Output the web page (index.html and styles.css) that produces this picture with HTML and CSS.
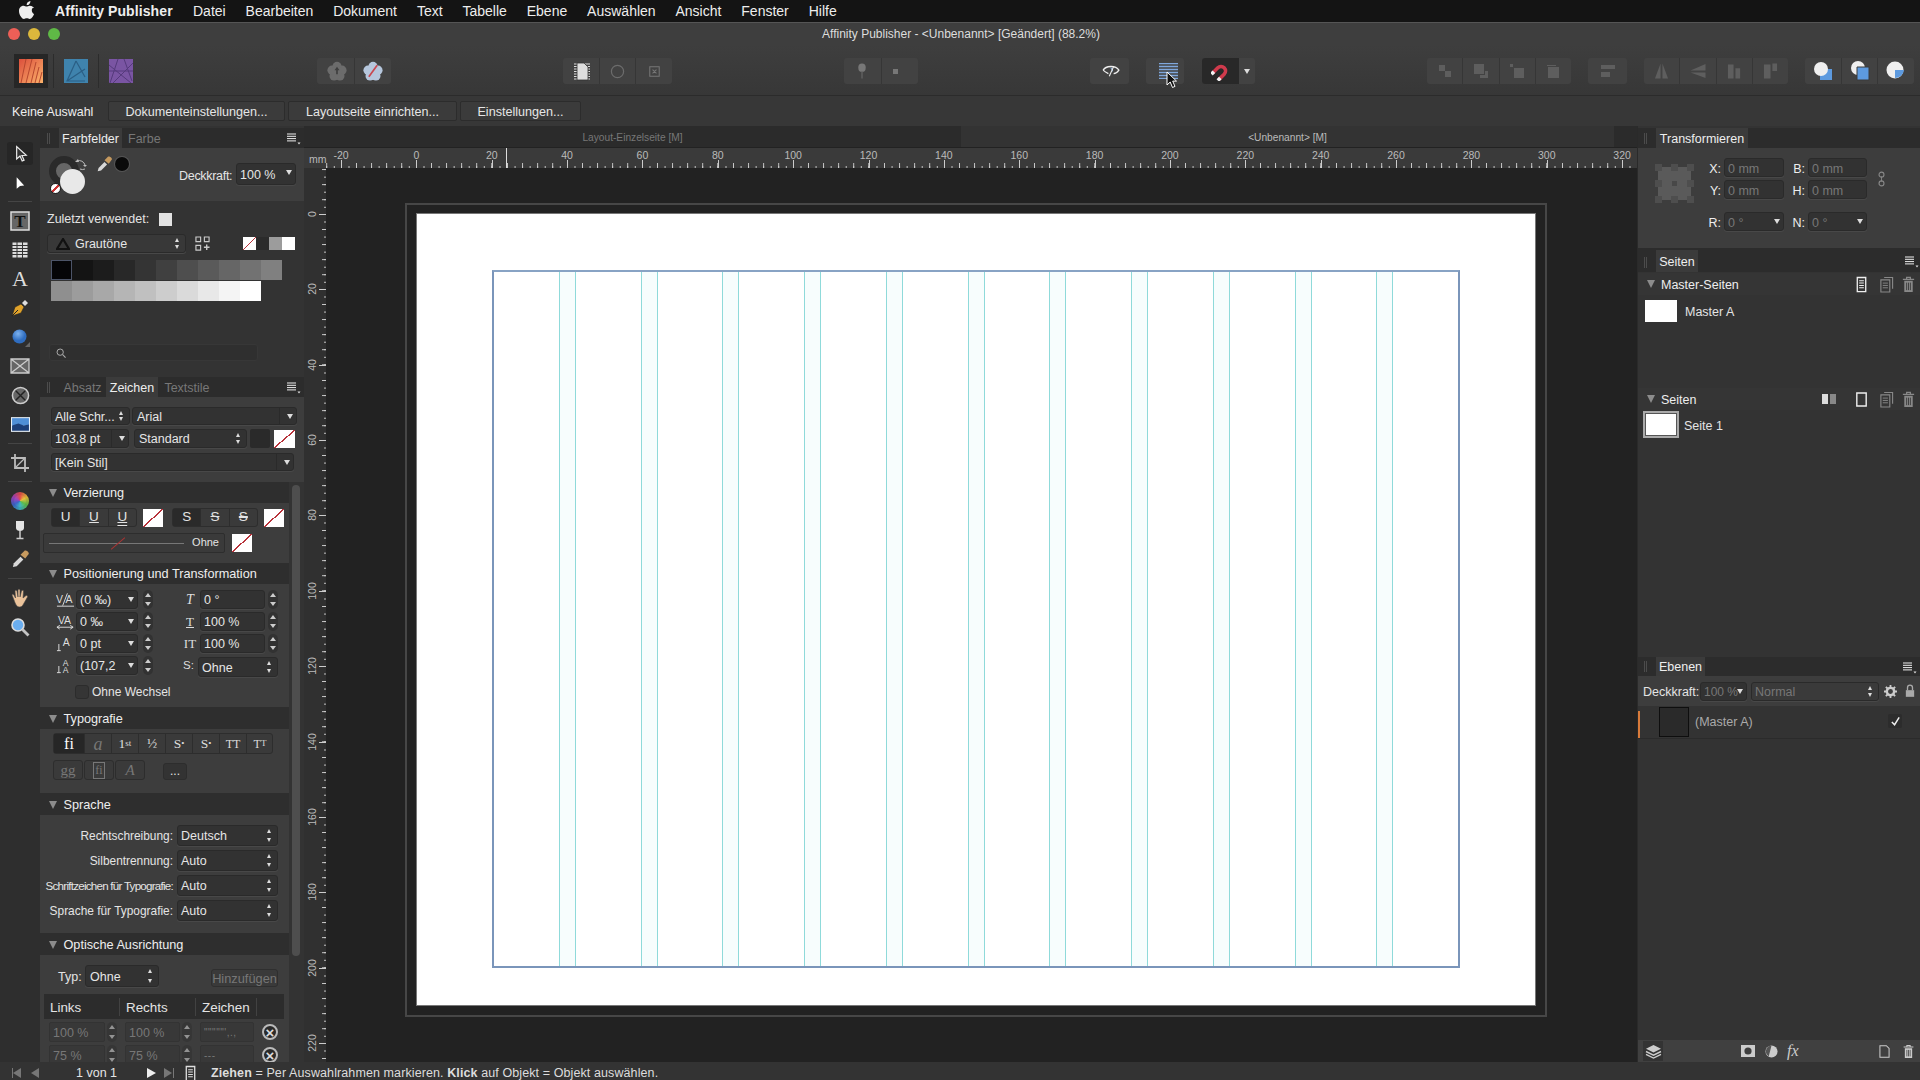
FILE: index.html
```html
<!DOCTYPE html>
<html lang="de">
<head>
<meta charset="utf-8">
<title>Affinity Publisher</title>
<link rel="stylesheet" href="styles.css">
</head>
<body>
<svg class="sprite" aria-hidden="true">
  <defs>
    <symbol id="pmenu" viewBox="0 0 14 12"><path d="M0 1h9M0 3.300h9M0 5.600h9M0 7.900h9" stroke="#eee" stroke-width="1"/><path d="M10.500 9.500h3l-1.500 2z" fill="#ddd"/></symbol>
    <symbol id="doc" viewBox="0 0 16 18"><path d="M3.500 1.500h9v15h-9z" fill="none" stroke="currentColor" stroke-width="1.400"/><path d="M5.500 5h5M5.500 7.500h5M5.500 10h5M5.500 12.500h5" stroke="currentColor" stroke-width="1.100"/></symbol>
    <symbol id="docs" viewBox="0 0 16 18"><path d="M5.500 1.500h9v12M2 4h9.500v13H2z" fill="none" stroke="currentColor" stroke-width="1.200"/><path d="M4 7.500h5.500M4 10h5.500M4 12.500h5.500" stroke="currentColor" stroke-width="1"/></symbol>
    <symbol id="trash" viewBox="0 0 16 18"><path d="M2 3.500h12M6 3V1.500h4V3" fill="none" stroke="currentColor" stroke-width="1.300"/><path d="M3.500 5h9v12h-9z" fill="currentColor"/><path d="M6 7v8M8 7v8M10 7v8" stroke="#333" stroke-width=".9"/></symbol>
    <symbol id="flower" viewBox="0 0 24 24"><circle cx="12" cy="6.500" r="5.500"/><circle cx="18" cy="11" r="5.500"/><circle cx="15.500" cy="18" r="5.500"/><circle cx="8.500" cy="18" r="5.500"/><circle cx="6" cy="11" r="5.500"/><circle cx="12" cy="12" r="6"/></symbol>
  </defs>
</svg>

<header class="menubar">
  <svg class="apple" viewBox="0 0 16 18"><path fill="#eee" d="M11.400 0c.1 1.100-.3 2.100-1 2.900-.7.800-1.700 1.300-2.700 1.200-.1-1 .4-2.100 1-2.800C9.400.6 10.500.1 11.400 0zM14.700 6.100c-1.200.8-1.900 1.900-1.900 3.300 0 1.600.9 2.800 2.300 3.500-.4 1.100-.9 2.100-1.600 3.100-.9 1.300-1.800 2-2.800 2-1.100 0-1.600-.7-2.900-.7s-1.800.7-2.900.7c-1 0-1.900-.8-2.900-2.200C.7 14 0 11.900 0 10c0-3.100 2-5.200 4.600-5.200 1.200 0 2.200.8 3 .8.700 0 1.900-.9 3.300-.9 1.600 0 2.900.7 3.800 2z"/></svg>
  <b class="appname">Affinity Publisher</b>
  <span>Datei</span><span>Bearbeiten</span><span>Dokument</span><span>Text</span><span>Tabelle</span><span>Ebene</span><span>Auswählen</span><span>Ansicht</span><span>Fenster</span><span>Hilfe</span>
</header>

<div class="titlebar">
  <div class="lights"><i class="red"></i><i class="yellow"></i><i class="green"></i></div>
  <div class="wintitle">Affinity Publisher - &lt;Unbenannt&gt; [Geändert] (88.2%)</div>
</div>

<div class="toolbar">
  <div class="persona on"><svg viewBox="0 0 24 24"><defs><linearGradient id="pub" x1="0" y1="0" x2="1" y2="1"><stop offset="0" stop-color="#dc4f3c"/><stop offset="1" stop-color="#fbb26b"/></linearGradient></defs><path d="M0 0h24v24H0z" fill="url(#pub)"/><path d="M7 0L2 24M13 0L7 24M17 3L12 24M20 8l-4 16M23 13l-3 11" stroke="#b5472f" stroke-width="1"/></svg></div>
  <i class="psep first"></i>
  <div class="persona"><svg viewBox="0 0 24 24"><path d="M0 0h24v24H0z" fill="#3f83ad"/><path d="M12 2L3 22h18M12 2l9 16M3 22L21 10" fill="none" stroke="#2b5f85" stroke-width="1.200"/></svg></div>
  <i class="psep"></i>
  <div class="persona"><svg viewBox="0 0 24 24"><path d="M0 0h24v24H0z" fill="#7a55a3"/><path d="M9 0L1 24M15 0l8 22M0 12h24M4 24L24 4M0 6l22 18" stroke="#553a7c" stroke-width="1"/></svg></div>

  <div class="tg g-share">
    <button class="tb shift2"><svg viewBox="0 0 24 24" width="20" height="20" class="ico-dim"><use href="#flower"/><path d="M12 7l-3 4h2v5h2v-5h2z" fill="#3f3f3f"/></svg></button>
    <button class="tb"><svg viewBox="0 0 24 24" width="20" height="20" class="ico-flower"><use href="#flower"/><path d="M7 19L17 5" stroke="#c9474f" stroke-width="2"/></svg></button>
  </div>
  <div class="tg g-view">
    <button class="tb shift2"><svg viewBox="0 0 20 20" width="20" height="20"><path d="M2 3h16M2 5.500h16M2 8h16M2 10.500h16M2 13h16M2 15.500h16M2 18h16" stroke="#ddd" stroke-width="1"/><path d="M5 2h7l4 4v13H5z" fill="#ddd" stroke="#333" stroke-width=".8"/></svg></button>
    <button class="tb"><svg viewBox="0 0 16 16" width="15" height="15"><circle cx="8" cy="8" r="6.500" fill="none" stroke="#6c6c6c" stroke-width="1.300"/></svg></button>
    <button class="tb"><svg viewBox="0 0 14 14" width="11" height="11"><path d="M1 1h12v12H1zM4.500 4.500l5 5M9.500 4.500l-5 5" fill="none" stroke="#777" stroke-width="1.300"/></svg></button>
  </div>
  <div class="tg g-pin">
    <button class="tb"><svg viewBox="0 0 12 20" width="10" height="18"><ellipse cx="6" cy="6" rx="4.500" ry="5" fill="#777"/><path d="M6 11v8" stroke="#777"/></svg></button>
    <button class="tb pin2"><svg viewBox="0 0 8 8" width="5" height="5"><path d="M0 0h8v8H0z" fill="#777"/></svg></button>
  </div>
  <div class="tg g-eye">
    <button class="tb"><svg viewBox="0 0 20 16" width="18" height="14"><path d="M1 7c3-5 14-6 18 0-2 3-4 4-6 4M7 11C5 10 3 9 1 7" fill="none" stroke="#eee" stroke-width="1.500"/><path d="M9 4c3 0 4 2 3 5" fill="#88a9cf"/><path d="M8 14l5-11" stroke="#eee" stroke-width="1.300"/></svg></button>
  </div>
  <div class="tg g-guides">
    <button class="tb"><svg class="gl" viewBox="0 0 19 16" width="19" height="16"><path d="M0 .500h19M0 3.500h19M0 6.500h19M0 9.500h19M0 12.500h19M0 15.500h19" stroke="#7fa7dc" stroke-width="1.300"/></svg></button>
    <svg class="cursor" viewBox="0 0 12 18" width="12" height="18"><path d="M1 1v13l3.200-3 2.300 5.500 2.500-1.100-2.300-5.300H10.500z" fill="#111" stroke="#fff" stroke-width="1"/></svg>
  </div>
  <div class="tg g-magnet">
    <button class="tb mag"><svg viewBox="0 0 20 20" width="20" height="20"><g transform="rotate(225 10 10)"><path d="M5.500 3v7a4.500 4.500 0 0 0 9 0V3" fill="none" stroke="#cf3a4c" stroke-width="3.600"/><path d="M5.500 1v3.500M14.500 1v3.500" stroke="#f2f2f2" stroke-width="3.600"/></g></svg></button>
    <button class="tb magd"><i class="down lg"></i></button>
  </div>
  <div class="tg g-arr">
    <button class="tb"><svg viewBox="0 0 16 16" width="16" height="16" class="fd"><path d="M2 2h6v6H2zM8 8h6v6H8z"/></svg></button>
    <button class="tb"><svg viewBox="0 0 16 16" width="16" height="16" class="fd"><path d="M1 1h10v10H1z"/><path d="M12 8h3v7H7v-3h5z"/></svg></button>
    <button class="tb"><svg viewBox="0 0 16 16" width="16" height="16" class="fd"><path d="M1 1h3v3H1zM5 5h10v10H5z"/></svg></button>
    <button class="tb"><svg viewBox="0 0 16 16" width="16" height="16" class="fd"><path d="M2 2h9v1H2zM3 4h11v11H3z"/></svg></button>
  </div>
  <div class="tg g-one">
    <button class="tb"><svg viewBox="0 0 16 16" width="16" height="16" class="fd"><path d="M1 2h14v4H1zM1 9h9v5H1z"/></svg></button>
  </div>
  <div class="tg g-arr g-flip">
    <button class="tb"><svg viewBox="0 0 16 18" width="15" height="18" class="fd"><path d="M7 1v16H1zM9 1l6 16H9z"/></svg></button>
    <button class="tb"><svg viewBox="0 0 18 16" width="18" height="15" class="fd"><path d="M17 0v7H1zM17 9v6L1 9z"/></svg></button>
    <button class="tb"><svg viewBox="0 0 16 18" width="15" height="18" class="fd"><path d="M1 2h6v15H1zM9 6h5v11H9z"/></svg></button>
    <button class="tb"><svg viewBox="0 0 16 18" width="15" height="18" class="fd"><path d="M1 2h7v15H1zM10 1h5v8h-5z"/></svg></button>
  </div>
  <div class="tg g-bool">
    <button class="tb"><svg viewBox="0 0 20 20" width="20" height="20"><path d="M7 8h12v11H7z" fill="#5d9adf"/><circle cx="8" cy="8" r="7" fill="#efefef"/></svg></button>
    <button class="tb"><svg viewBox="0 0 20 20" width="20" height="20"><circle cx="8" cy="7" r="7" fill="#efefef"/><path d="M7 6h12v13H7z" fill="#5d9adf" stroke="#3a3a3a"/></svg></button>
    <button class="tb"><svg viewBox="0 0 20 20" width="20" height="20"><circle cx="9" cy="9" r="8.500" fill="#efefef"/><path d="M9 9h9a9 9 0 0 1-9 8z" fill="#5d9adf"/></svg></button>
  </div>
</div>

<div class="contextbar">
  <span class="nosel">Keine Auswahl</span>
  <button class="cb cb1">Dokumenteinstellungen...</button>
  <button class="cb cb2">Layoutseite einrichten...</button>
  <button class="cb cb3">Einstellungen...</button>
</div>

<div class="main">
  <nav class="tools">
    <div class="tool sel-tool"><svg viewBox="0 0 24 24" width="20" height="20"><path d="M8 3v15l4-3.500 2.600 6 2.300-1-2.600-5.700 5.200-.3z" fill="#333" stroke="#eee" stroke-width="1.400"/></svg></div>
    <div class="tool"><svg viewBox="0 0 24 24" width="20" height="20"><path d="M8 5v14l4-3.500 5-.5z" fill="#fff"/></svg></div>
    <i class="tool-sep"></i>
    <div class="tool"><svg viewBox="0 0 20 20" width="20" height="20"><path d="M1 1h18v18H1z" fill="#666" stroke="#ddd" stroke-width="1.500"/><text x="10" y="16" text-anchor="middle" class="svgserif" font-size="17" font-weight="700" fill="#111">T</text></svg></div>
    <div class="tool"><svg viewBox="0 0 18 18" width="18" height="18"><path d="M1 1h16v16H1z" fill="#ddd"/><path d="M1 1h16v16H1zM1 4.500h16M1 7.500h16M1 10.500h16M1 13.500h16M6 1v16M11.500 1v16" fill="none" stroke="#333"/></svg></div>
    <div class="tool"><span class="ta">A</span></div>
    <div class="tool"><svg viewBox="0 0 20 20" width="20" height="20"><path d="M2 18l3-9 6-3 3 3-3 6z" fill="#e0a22a" stroke="#222" stroke-width=".6"/><path d="M2 18l6-6" stroke="#222"/><path d="M12 5l3-3 3 3-3 3z" fill="#ddd"/></svg></div>
    <div class="tool"><svg viewBox="0 0 20 20" width="20" height="20"><defs><radialGradient id="blueb" cx=".4" cy=".3"><stop offset="0" stop-color="#7db2ee"/><stop offset="1" stop-color="#2f6dc0"/></radialGradient></defs><circle cx="9.500" cy="9.500" r="7" fill="url(#blueb)"/><path d="M20 15v5h-5z" fill="#666"/></svg></div>
    <div class="tool"><svg viewBox="0 0 20 16" width="20" height="16"><path d="M1 1h18v14H1zM1 1l18 14M19 1L1 15" fill="#666" stroke="#ccc" stroke-width="1.300"/></svg></div>
    <div class="tool"><svg viewBox="0 0 20 20" width="19" height="19"><circle cx="10" cy="10" r="8.500" fill="#666" stroke="#ccc" stroke-width="1.600"/><path d="M5 5l10 10M15 5L5 15" stroke="#222" stroke-width="1.500"/></svg></div>
    <div class="tool"><svg viewBox="0 0 18 14" width="19" height="15"><path d="M0 0h18v14H0z" fill="#e6eef6"/><path d="M1 1h16v7H1z" fill="#4f8fd6"/><path d="M1 8l6-2 5 2 5-1v6H1z" fill="#1c3f78"/></svg></div>
    <i class="tool-sep"></i>
    <div class="tool"><svg viewBox="0 0 20 20" width="20" height="20"><path d="M5 1v14h14M1 5h14v14" fill="none" stroke="#bbb" stroke-width="1.800"/><path d="M5 15L15 5" stroke="#bbb" stroke-width="1.200"/></svg></div>
    <i class="tool-sep"></i>
    <div class="tool"><div class="wheel"></div></div>
    <div class="tool"><svg viewBox="0 0 12 20" width="12" height="20"><path d="M2 1h8v7c0 2-2 3-4 3s-4-1-4-3z" fill="#e4e4e4"/><path d="M6 11v7M2.500 18.500h7" stroke="#ccc" stroke-width="1.500"/></svg></div>
    <div class="tool"><svg viewBox="0 0 20 20" width="19" height="19"><path d="M2 18l1-4 7-7 3 3-7 7z" fill="#d8d8d8"/><path d="M10 5l4-4c1-1 3 0 4 1s1 2 0 3l-3 4z" fill="#c69a5f"/></svg></div>
    <i class="tool-sep"></i>
    <div class="tool"><svg viewBox="0 0 20 20" width="20" height="20"><path d="M4 12L2 7c0-1 1-1 2 0l1.500 3L5 3c0-1 1.500-1 2 0l1 6V2c0-1 2-1 2 0v7l1.500-6c.5-1 2-1 2 0L13 10l2.500-2c1-1 2.500 0 2 1l-4 7c-1 2-2 3-4 3-3 0-4-3-5.500-7z" fill="#eac29a" stroke="#444" stroke-width=".6"/></svg></div>
    <div class="tool"><svg viewBox="0 0 20 20" width="20" height="20"><circle cx="8" cy="8" r="6" fill="#6aaef0" stroke="#ddd" stroke-width="1.600"/><path d="M12.500 12.500l6 6" stroke="#c4c4c4" stroke-width="2.800"/></svg></div>
  </nav>

  <section class="leftpanel">
    <div class="ph">
      <i class="grip"></i>
      <span class="tab on t-farbfelder">Farbfelder</span><span class="tab t-farbe">Farbe</span>
      <svg class="pm"><use href="#pmenu"/></svg>
    </div>
    <div class="colorbox">
      <div class="fgbg">
        <i class="ring"></i><i class="fill"></i><i class="none-c"></i>
        <svg class="swap" viewBox="0 0 12 12" width="12" height="12"><path d="M2 2a6 6 0 0 1 8 4M10 10a6 6 0 0 1-5 0" fill="none" stroke="#bbb"/><path d="M0 3l3-3 1 3zM8 6h4l-2 2z" fill="#bbb"/></svg>
      </div>
      <svg class="drop-ic" viewBox="0 0 20 20" width="17" height="17"><path d="M2 18l1-4 7-7 3 3-7 7z" fill="#d8d8d8"/><path d="M10 5l4-4c1-1 3 0 4 1s1 2 0 3l-3 4z" fill="#c69a5f"/></svg>
      <i class="blackdot"></i>
      <span class="lab-op">Deckkraft:</span>
      <div class="fld drp op"><span>100 %</span></div>
    </div>
    <div class="swatches">
      <div class="recent"><span>Zuletzt verwendet:</span><i class="rsw"></i></div>
      <div class="palrow">
        <div class="fld2 spin pal"><svg viewBox="0 0 14 12" width="14" height="12"><path d="M7 1L1 11h12z" fill="none" stroke="#111" stroke-width="2.200"/></svg><span>Grautöne</span></div>
        <svg class="addgrid" viewBox="0 0 16 16" width="15" height="15"><path d="M1 1h5v5H1zM10 1h5v5h-5zM1 10h5v5H1z" fill="none" stroke="#ccc" stroke-width="1.200"/><path d="M12.500 9v6M9.500 12h6" stroke="#ccc" stroke-width="1.500"/></svg>
        <div class="mini"><i class="none"></i><i class="m-d"></i><i class="m-g"></i><i class="m-w"></i></div>
      </div>
      <div class="swgrid">
        <i class="s0"></i><i class="s1"></i><i class="s2"></i><i class="s3"></i><i class="s4"></i><i class="s5"></i><i class="s6"></i><i class="s7"></i><i class="s8"></i><i class="s9"></i><i class="s10"></i>
        <i class="s11"></i><i class="s12"></i><i class="s13"></i><i class="s14"></i><i class="s15"></i><i class="s16"></i><i class="s17"></i><i class="s18"></i><i class="s19"></i><i class="s20"></i>
      </div>
      <div class="search"><svg viewBox="0 0 12 12" width="10" height="10"><circle cx="5" cy="5" r="3.800" fill="none" stroke="#aaa" stroke-width="1.200"/><path d="M8 8l3.500 3.500" stroke="#aaa" stroke-width="1.300"/></svg></div>
    </div>

    <div class="ph">
      <i class="grip"></i>
      <span class="tab t-absatz">Absatz</span><span class="tab on t-zeichen">Zeichen</span><span class="tab t-textstile">Textstile</span>
      <svg class="pm"><use href="#pmenu"/></svg>
    </div>
    <div class="charbox">
      <div class="crow"><div class="fld2 spin w-alle">Alle Schr...</div><div class="fld2 drp w-font">Arial</div></div>
      <div class="crow r2"><div class="fld2 drp w-size">103,8 pt</div><div class="fld2 spin w-std">Standard</div><i class="swd"></i><i class="none sw21"></i></div>
      <div class="crow r3"><div class="fld2 drp w-stil">[Kein Stil]</div></div>
    </div>

    <div class="scrollwrap">
      <div class="sections">
        <div class="sh"><i class="tri"></i>Verzierung</div>
        <div class="sb b-verz">
          <div class="vrow">
            <div class="bgroup"><span class="on">U</span><span class="ul">U</span><span class="ul2">U</span></div>
            <i class="none sw20"></i>
            <div class="bgroup g2"><span class="on">S</span><span class="st">S</span><span class="st2">S</span></div>
            <i class="none sw20"></i>
          </div>
          <div class="vrow r2">
            <div class="linebox"><i class="ln"></i><i class="slash"></i><span>Ohne</span></div>
            <i class="none sw20"></i>
          </div>
        </div>

        <div class="sh"><i class="tri"></i>Positionierung und Transformation</div>
        <div class="sb b-pos">
          <div class="posgrid">
            <div class="pcell"><svg class="pk" viewBox="0 0 20 16"><text x="0" y="11">V</text><text x="10" y="11">A</text><path d="M7 14l5-13M1 14.500h18" stroke="#ddd" fill="none"/></svg><div class="fld2 drp w62">(0 ‰)</div><i class="stepper"></i></div>
            <div class="pcell rc"><span class="pi it">T</span><div class="fld2 w65">0 °</div><i class="stepper"></i></div>
            <div class="pcell"><svg class="pk" viewBox="0 0 20 16"><text x="2" y="10" font-size="11">VA</text><path d="M1 13.500h17M1 13.500l3-2M1 13.500l3 2M18 13.500l-3-2M18 13.500l-3 2" stroke="#ddd" fill="none"/></svg><div class="fld2 drp w62">0 ‰</div><i class="stepper"></i></div>
            <div class="pcell rc"><span class="pi serif ul-i">T</span><div class="fld2 w65">100 %</div><i class="stepper"></i></div>
            <div class="pcell"><svg class="pk" viewBox="0 0 20 16"><text x="7" y="10" font-size="11">A</text><path d="M3 8v7M1 15h4" stroke="#ddd" fill="none"/></svg><div class="fld2 drp w62">0 pt</div><i class="stepper"></i></div>
            <div class="pcell rc"><span class="pi serif">IT</span><div class="fld2 w65">100 %</div><i class="stepper"></i></div>
            <div class="pcell"><svg class="pk" viewBox="0 0 20 16"><text x="7" y="7.500" font-size="9">A</text><text x="7" y="15.500" font-size="9">A</text><path d="M3 8v7M1 15h4" stroke="#ddd" fill="none"/></svg><div class="fld2 drp w62">(107,2</div><i class="stepper"></i></div>
            <div class="pcell rc"><span class="pi slab">S:</span><div class="fld2 spin w80">Ohne</div></div>
          </div>
          <div class="chk"><i></i><span>Ohne Wechsel</span></div>
        </div>

        <div class="sh sh22"><i class="tri"></i>Typografie</div>
        <div class="sb b-typo">
          <div class="tgroup">
            <span class="on">fi</span><span class="dim"><em>a</em></span><span>1<sup>st</sup></span><span>½</span><span>S<sup>•</sup></span><span>S<sub>•</sub></span><span class="sm">TT</span><span class="sm">T<small>T</small></span>
          </div>
          <div class="trow2">
            <span class="tbtn dim">gg</span><span class="tbtn dim boxed"><b>fi</b></span><span class="tbtn dim"><em>A</em></span><span class="more">...</span>
          </div>
        </div>

        <div class="sh sh22"><i class="tri"></i>Sprache</div>
        <div class="sb b-lang">
          <div class="lrow"><label>Rechtschreibung:</label><div class="fld2 spin w101">Deutsch</div></div>
          <div class="lrow"><label>Silbentrennung:</label><div class="fld2 spin w101">Auto</div></div>
          <div class="lrow"><label class="tight">Schriftzeichen für Typografie:</label><div class="fld2 spin w101">Auto</div></div>
          <div class="lrow"><label>Sprache für Typografie:</label><div class="fld2 spin w101">Auto</div></div>
        </div>

        <div class="sh sh22"><i class="tri"></i>Optische Ausrichtung</div>
        <div class="sb b-opt">
          <div class="typrow"><span>Typ:</span><div class="fld2 spin w74">Ohne</div><span class="hinz">Hinzufügen</span></div>
          <div class="thead"><span class="c1">Links</span><span class="c2">Rechts</span><span class="c3">Zeichen</span></div>
          <div class="trow"><div class="d-in">100 %</div><i class="stepper"></i><div class="d-in m2">100 %</div><i class="stepper"></i><div class="d-in m3 qs">"""""',.,</div><i class="xc">×</i></div>
          <div class="trow"><div class="d-in">75 %</div><i class="stepper"></i><div class="d-in m2">75 %</div><i class="stepper"></i><div class="d-in m3 qs">---</div><i class="xc">×</i></div>
        </div>
      </div>
      <div class="scrolltrack"><i></i></div>
    </div>
  </section>

  <main class="workspace">
    <div class="doctabs">
      <div class="dt dt1">Layout-Einzelseite [M]</div>
      <div class="dt dt2">&lt;Unbenannt&gt; [M]</div>
      <div class="dt dt3"></div>
    </div>
    <div class="rulerrow">
      <div class="corner">mm</div>
      <div class="hruler">
        <span></span><span><b>-20</b></span><span><b>0</b></span><span><b>20</b></span><span><b>40</b></span><span><b>60</b></span><span><b>80</b></span><span><b>100</b></span><span><b>120</b></span><span><b>140</b></span><span><b>160</b></span><span><b>180</b></span><span><b>200</b></span><span><b>220</b></span><span><b>240</b></span><span><b>260</b></span><span><b>280</b></span><span><b>300</b></span><span><b>320</b></span>
        <i class="rmark"></i>
      </div>
    </div>
    <div class="canvasrow">
      <div class="vruler">
        <span></span><span><b>0</b></span><span><b>20</b></span><span><b>40</b></span><span><b>60</b></span><span><b>80</b></span><span><b>100</b></span><span><b>120</b></span><span><b>140</b></span><span><b>160</b></span><span><b>180</b></span><span><b>200</b></span><span><b>220</b></span>
      </div>
      <div class="canvas">
        <div class="bleed">
          <div class="page">
            <div class="margins">
              <i></i><i></i><i></i><i></i><i></i><i></i><i></i><i></i><i></i><i></i><i></i><i></i>
            </div>
          </div>
        </div>
      </div>
    </div>
  </main>

  <aside class="rightpanel">
    <div class="ph">
      <i class="grip"></i>
      <span class="tab on t-trans">Transformieren</span>
    </div>
    <div class="transform">
      <div class="anchor"><i></i><i></i><i></i><i></i><i class="mid"></i><i></i><i></i><i></i><i></i></div>
      <label class="x1">X:</label><div class="fld dim-in">0 mm</div>
      <label>B:</label><div class="fld dim-in">0 mm</div>
      <svg class="link" viewBox="0 0 8 18" width="7" height="16"><circle cx="4" cy="4" r="2.800" fill="none" stroke="#888" stroke-width="1.300"/><circle cx="4" cy="14" r="2.800" fill="none" stroke="#888" stroke-width="1.300"/><path d="M4 6v6" stroke="#888"/></svg>
      <label class="x1">Y:</label><div class="fld dim-in">0 mm</div>
      <label>H:</label><div class="fld dim-in">0 mm</div>
      <label class="x1 r3">R:</label><div class="fld drp dim-in r3">0 °</div>
      <label class="r3">N:</label><div class="fld drp dim-in r3">0 °</div>
    </div>

    <div class="ph ph24">
      <i class="grip"></i>
      <span class="tab on t-seiten">Seiten</span>
      <svg class="pm"><use href="#pmenu"/></svg>
    </div>
    <div class="subh"><i class="tri"></i>Master-Seiten
      <div class="subic"><svg class="hi"><use href="#doc"/></svg><svg class="lo"><use href="#docs"/></svg><svg class="lo"><use href="#trash"/></svg></div>
    </div>
    <div class="plist m"><i class="thumb"></i><span>Master A</span></div>
    <div class="subh"><i class="tri"></i>Seiten
      <div class="subic"><svg class="spread" viewBox="0 0 14 10"><path d="M0 0h6v10H0z" fill="#ddd"/><path d="M8 0h6v10H8z" fill="#888"/></svg><svg class="hi" viewBox="0 0 16 18"><path d="M3 2h10v14H3z" fill="none" stroke="#eee" stroke-width="1.500"/></svg><svg class="lo"><use href="#docs"/></svg><svg class="lo"><use href="#trash"/></svg></div>
    </div>
    <div class="plist s"><i class="thumb big"></i><span>Seite 1</span></div>

    <div class="ph ph19">
      <i class="grip"></i>
      <span class="tab on t-ebenen">Ebenen</span>
      <svg class="pm"><use href="#pmenu"/></svg>
    </div>
    <div class="layerctl">
      <span class="lk">Deckkraft:</span>
      <div class="fld drp dim-in l-op">100 %</div>
      <div class="fld spin dim-in l-mode">Normal</div>
      <svg class="gear" viewBox="0 0 16 16" width="13" height="13"><circle cx="8" cy="8" r="4.500" fill="none" stroke="#ccc" stroke-width="3"/><path d="M8 0v3M8 13v3M0 8h3M13 8h3M2.300 2.300l2 2M11.700 11.700l2 2M2.300 13.700l2-2M11.700 4.300l2-2" stroke="#ccc" stroke-width="2.200"/></svg>
      <svg class="lock" viewBox="0 0 12 16" width="10" height="14"><path d="M3 7V4a3 3 0 0 1 6 0v3" fill="none" stroke="#aaa" stroke-width="1.600"/><path d="M1 7h10v8H1z" fill="#aaa"/></svg>
    </div>
    <div class="layerrow">
      <i class="orange"></i>
      <i class="lthumb"></i>
      <span>(Master A)</span>
      <i class="lcheck"><svg viewBox="0 0 12 12" width="11" height="11"><path d="M2 6.500l3 3 5-8" fill="none" stroke="#eee" stroke-width="1.600"/></svg></i>
    </div>
    <div class="rspace"></div>
    <div class="rfoot">
      <span class="stack"><svg viewBox="0 0 18 16" width="17" height="15"><path d="M9 1l8 4-8 4-8-4z" fill="#ccc"/><path d="M1 8l8 4 8-4M1 11l8 4 8-4" fill="none" stroke="#ccc" stroke-width="1.500"/></svg></span>
      <svg class="f-mask" viewBox="0 0 14 12" width="14" height="12"><path d="M0 0h14v12H0z" fill="#ccc"/><circle cx="7" cy="6" r="3.600" fill="#3d3d3d"/></svg>
      <svg class="f-adj" viewBox="0 0 14 14" width="13" height="13"><circle cx="7" cy="7" r="6.500" fill="#ccc"/><path d="M7 .5a6.500 6.500 0 0 0-3 12z" fill="#555"/></svg>
      <span class="fx">fx</span>
      <svg class="f-doc" viewBox="0 0 12 14" width="11" height="13"><path d="M1 .7h7l3 3v9.600H1z" fill="none" stroke="#ccc" stroke-width="1.100"/></svg>
      <svg class="f-tr"><use href="#trash"/></svg>
    </div>
  </aside>
</div>

<footer class="status">
  <div class="nav">
    <i class="bar"></i><i class="lt dimt"></i><i class="lt dimt n2"></i>
    <span>1 von 1</span>
    <i class="rt"></i><i class="rt dimt n3"></i><i class="bar dimbar"></i>
    <svg class="sdoc"><use href="#doc"/></svg>
  </div>
  <p><b>Ziehen</b> = Per Auswahlrahmen markieren. <b>Klick</b> auf Objekt = Objekt auswählen.</p>
</footer>
</body>
</html>
```

FILE: styles.css
```css
* { box-sizing: border-box; }
html, body { margin: 0; padding: 0; }
body {
  width: 1920px; height: 1080px; overflow: hidden;
  background: #333; color: #e4e4e4;
  font: 12px/1.2 "Liberation Sans", Arial, sans-serif;
}
i { display: block; font-style: normal; }
button { font: inherit; color: inherit; margin: 0; padding: 0; }
.sprite { position: absolute; width: 0; height: 0; }

/* menu bar */
.menubar { height: 23px; background: #141414; border-bottom: 1px solid #555; display: flex; align-items: center; font-size: 14px; color: #eee; padding-top: 1px; }
.menubar span { margin-right: 19.900px; }
.apple { width: 16px; height: 18px; margin: -3px 20px 0 19px; flex: none; }
.appname { width: 138px; flex: none; font-size: 14px; letter-spacing: .1px; }

/* title + toolbar */
.titlebar { height: 22px; position: relative; background: #3e3e3e; display: flex; align-items: center; justify-content: center; }
.lights { position: absolute; left: 8px; top: 5px; display: flex; gap: 8px; }
.lights i { width: 12px; height: 12px; border-radius: 50%; }
.red { background: #ed5f57; } .yellow { background: #dcb83c; } .green { background: #5fb946; }
.wintitle { font-size: 12px; color: #ddd; margin-left: 2px; }

.toolbar { height: 51px; background: linear-gradient(#3e3e3e, #373737); border-bottom: 1px solid #2b2b2b; display: flex; align-items: flex-start; padding: 13px 0 0 14px; }
.persona { height: 26px; width: 24px; display: flex; align-items: center; justify-content: center; flex: none; }
.persona svg { width: 24px; height: 24px; }
.persona.on { width: 34px; height: 34px; margin-top: -4px; background: #262626; }
.psep { width: 1px; height: 34px; margin: -4px 10px 0; background: #2c2c2c; }
.psep.first { margin-left: 5px; }
.tg { display: flex; height: 26px; background: #424242; border-radius: 3px; position: relative; flex: none; }
.tb { flex: 1; border: 0; background: none; display: flex; align-items: center; justify-content: center; border-left: 1px solid #363636; }
.tb:first-child { border-left: 0; }
.shift2 svg { margin-left: 3px; }
.pin2 svg { margin-right: 8px; }
.gl { margin-left: 6px; }
.g-eye svg { margin-left: 3px; }
.ico-dim { fill: #6c6c6c; }
.ico-flower { fill: #b6c7dd; }
.fd { fill: #5e5e5e; }
.g-share { margin-left: 184px; width: 74px; }
.g-view { margin-left: 172px; width: 109px; }
.g-pin { margin-left: 172px; width: 74px; }
.g-eye { margin-left: 172px; width: 39px; }
.g-guides { margin-left: 17px; width: 38px; }
.g-magnet { margin-left: 18px; width: 53px; }
.g-arr { margin-left: 172px; width: 144px; }
.g-one { margin-left: 17px; width: 39px; }
.g-flip { margin-left: 17px; }
.g-bool { margin-left: 17px; width: 109px; }
.mag { flex: none; width: 37px; background: #282828; border-radius: 3px 0 0 3px; }
.magd { border: 0; }
.cursor { position: absolute; left: 20px; top: 13px; }
.down { width: 0; height: 0; border: 3.500px solid transparent; border-top: 5px solid #ddd; border-bottom: 0; }
.down.lg { border-width: 5px 3.500px 0; }

/* context bar */
.contextbar { height: 30px; background: #373737; display: flex; align-items: center; padding-left: 12px; }
.nosel { width: 96px; font-size: 12.400px; color: #eee; flex: none; padding-top: 2px; }
.cb { height: 20px; background: #3b3b3b; border: 1px solid #2c2c2c; border-radius: 2px; font-size: 12.600px; color: #e6e6e6; flex: none; margin-right: 3px; padding-top: 3px; }
.cb1 { width: 177px; } .cb2 { width: 169px; } .cb3 { width: 121px; }

/* main */
.main { height: 936px; display: flex; }
.tools { width: 40px; flex: none; background: #2e2e2e; padding-top: 13px; display: flex; flex-direction: column; align-items: center; }
.tool { height: 29px; width: 26px; flex: none; display: flex; align-items: center; justify-content: center; }
.sel-tool { height: 23px; margin: 3px 0; background: #262626; border-radius: 3px; }
.tool-sep { width: 24px; height: 1px; margin: 4px 0 4.500px; background: #454545; flex: none; }
.ta { font: 22px "Liberation Serif", serif; color: #ddd; }
.svgserif { font-family: "Liberation Serif", serif; }
.wheel { width: 18px; height: 18px; border-radius: 50%; background: conic-gradient(#e24b4b, #e8c23c, #5ebc4a, #3fb5c5, #3d64c9, #a044bd, #e24b4b); position: relative; box-shadow: inset 0 0 0 3px rgba(0,0,0,.08); }

/* panels shared */
.ph { height: 20px; background: #2c2c2c; display: flex; align-items: flex-end; position: relative; flex: none; font-size: 12.500px; }
.ph24 { height: 24px; }
.ph19 { height: 19px; margin-top: 3px; }
.grip { width: 3px; height: 11px; border-left: 1px solid #4c4c4c; border-right: 1px solid #4c4c4c; margin: 0 0 4px 7px; flex: none; }
.tab { height: 20px; display: flex; align-items: center; justify-content: center; color: #777; flex: none; padding-top: 2px; }
.ph24 .tab { height: 22px; }
.ph19 .tab { height: 19px; }
.tab.on { background: #3b3b3b; color: #eee; }
.pm { width: 14px; height: 12px; position: absolute; right: 3px; top: 5px; }
.ph24 .pm { right: 1px; top: 8px; }
.t-farbfelder { width: 63px; margin-left: 9px; }
.t-farbe { width: 38px; justify-content: flex-start; padding-left: 6px; }
.t-absatz { width: 47px; margin-left: 9px; }
.t-zeichen { width: 52px; font-weight: 400; }
.t-textstile { width: 58px; }
.t-trans { width: 92px; margin-left: 9px; }
.t-seiten { width: 42px; margin-left: 9px; }
.t-ebenen { width: 49px; margin-left: 9px; }

.fld, .fld2 { position: relative; height: 19px; background: #323232; border: 1px solid #2a2a2a; border-radius: 3px; box-shadow: 0 1px 0 #484848; display: flex; align-items: center; padding: 2px 0 0 3px; color: #e6e6e6; font-size: 12.500px; flex: none; white-space: nowrap; }
.fld { padding-top: 3px; }
.fld.dim-in { color: #777; }
.drp::after { content: ""; position: absolute; right: 3px; top: 6px; border: 3px solid transparent; border-top: 5px solid #ddd; border-bottom: 0; }
.spin::before { content: ""; position: absolute; right: 6px; top: 3px; border: 2.500px solid transparent; border-bottom: 4px solid #ddd; border-top: 0; }
.spin::after { content: ""; position: absolute; right: 6px; bottom: 3px; border: 2.500px solid transparent; border-top: 4px solid #ddd; border-bottom: 0; }
.none { background: linear-gradient(to bottom right, #fff 47.500%, #b8323a 47.500%, #b8323a 52.500%, #fff 52.500%); flex: none; }

/* left panel */
.leftpanel { width: 264px; flex: none; padding-top: 2px; background: #333; display: flex; flex-direction: column; overflow: hidden; }
.colorbox { height: 53px; background: #3e3e3e; position: relative; flex: none; }
.fgbg { position: absolute; left: 9px; top: 8px; width: 40px; height: 38px; }
.ring { position: absolute; left: 0; top: 0; width: 30px; height: 30px; border: 7px solid #2a2a2a; border-radius: 50%; background: #666; }
.fill { position: absolute; left: 11px; top: 13px; width: 25px; height: 25px; border-radius: 50%; background: #e8e8e8; }
.none-c { position: absolute; left: 1px; top: 27px; width: 11px; height: 11px; border-radius: 50%; background: linear-gradient(to bottom right, #fff 42%, #c33 42%, #c33 58%, #fff 58%); border: 1px solid #222; }
.swap { position: absolute; left: 26px; top: 3px; }
.drop-ic { position: absolute; left: 56px; top: 8px; }
.blackdot { position: absolute; left: 75px; top: 9px; width: 14px; height: 14px; border-radius: 50%; background: #0a0a0a; box-shadow: 0 0 0 1px #555; }
.lab-op { position: absolute; left: 139px; top: 21px; letter-spacing: -.3px; font-size: 12.500px; }
.op { position: absolute; left: 196px; top: 15px; width: 60px; height: 22px; }
.swatches { height: 176px; flex: none; padding: 12px 0 0 7px; background: #333; }
.recent { display: flex; align-items: center; height: 13px; font-size: 12.500px; }
.recent span { width: 112px; flex: none; }
.rsw { width: 13px; height: 13px; background: #e2e2e2; }
.palrow { display: flex; align-items: center; margin-top: 8px; height: 19px; }
.pal { width: 139px; background: #383838; gap: 5px; padding-left: 8px; }
.pal svg { margin-top: -2px; }
.addgrid { margin-left: 9px; flex: none; }
.mini { display: flex; margin-left: 33px; }
.mini i { width: 13px; height: 13px; }
.m-d { background: #2b2b2b; } .m-g { background: #9c9c9c; } .m-w { background: #fff; }
.swgrid { display: grid; grid-template-columns: repeat(11, 21px); grid-auto-rows: 20px; row-gap: 1px; margin: 7px 0 0 4px; }
.s0 { background: #050507; box-shadow: inset 0 0 0 1px #4c5468; } .s1 { background: #141414; } .s2 { background: #1c1c1c; } .s3 { background: #282828; } .s4 { background: #343434; } .s5 { background: #404040; } .s6 { background: #4e4e4e; } .s7 { background: #5a5a5a; } .s8 { background: #666; } .s9 { background: #727272; } .s10 { background: #808080; }
.s11 { background: #8f8f8f; } .s12 { background: #9c9c9c; } .s13 { background: #a8a8a8; } .s14 { background: #b5b5b5; } .s15 { background: #c0c0c0; } .s16 { background: #cdcdcd; } .s17 { background: #dadada; } .s18 { background: #e8e8e8; } .s19 { background: #f4f4f4; } .s20 { background: #fff; }
.search { width: 209px; height: 17px; margin: 43px 0 0 2px; background: #2f2f2f; border: 1px solid #373737; border-radius: 3px; display: flex; align-items: center; padding-left: 6px; }

.charbox { height: 84px; background: #3d3d3d; padding: 10px 0 0 11px; flex: none; }
.crow { display: flex; align-items: center; height: 18px; }
.crow.r2 { height: 19px; margin-top: 4px; }
.crow.r3 { margin-top: 5px; }
.w-alle { width: 79px; height: 18px; }
.w-font { width: 165px; height: 18px; margin-left: 2px; padding-left: 4px; }
.w-size { width: 78px; }
.w-std { width: 113px; margin-left: 5px; padding-left: 4px; }
.w-stil { width: 243px; height: 18px; }
.w-font::before, .w-size::before, .w-stil::before { content: ""; position: absolute; right: 16px; top: 0; bottom: 0; width: 1px; background: #2a2a2a; }
.swd { width: 20px; height: 19px; margin-left: 3px; background: #2a2a2a; border-radius: 2px; }
.sw21 { width: 21px; height: 18px; margin-left: 4px; }

.scrollwrap { flex: 1; display: flex; min-height: 0; overflow: hidden; padding-top: 1px; background: #3d3d3d; }
.sections { width: 249px; flex: none; }
.sh { height: 21px; background: #2e2e2e; display: flex; align-items: center; padding: 2px 0 0 9px; font-size: 12.700px; color: #eee; }
.sh22 { height: 22px; padding-top: 3px; }
.tri { width: 0; height: 0; border: 4.500px solid transparent; border-top: 8px solid #8c8c8c; border-bottom: 0; margin-right: 6px; flex: none; margin-top: -2px; }
.sh .tri { margin-right: 6.500px; }
.sb { background: #3d3d3d; }
.b-verz { height: 60px; padding: 5px 0 0 11px; }
.vrow { display: flex; align-items: center; height: 19px; }
.vrow.r2 { height: 20px; margin: 6px 0 0 -8px; }
.bgroup { display: flex; width: 86px; height: 19px; border: 1px solid #2d2d2d; border-radius: 3px; background: #3a3a3a; flex: none; }
.bgroup span { flex: 1; display: flex; align-items: center; justify-content: center; font-size: 13.500px; border-left: 1px solid #2d2d2d; }
.bgroup span:first-child { border-left: 0; }
.bgroup span.on { background: #2a2a2a; }
.bgroup .ul { text-decoration: underline; }
.bgroup .ul2 { text-decoration: underline double; }
.bgroup .st { text-decoration: line-through; }
.bgroup .st2 { text-decoration: line-through; text-decoration-thickness: 2px; }
.g2 { margin-left: 9px; }
.sw20 { width: 20px; height: 18px; margin-left: 6px; }
.linebox { width: 182px; height: 20px; border: 1px solid #2d2d2d; border-radius: 2px; background: #3a3a3a; display: flex; align-items: center; justify-content: flex-end; padding-right: 5px; position: relative; font-size: 11px; flex: none; margin-right: 1px; }
.ln { position: absolute; left: 5px; width: 135px; height: 1px; background: #777; }
.slash { position: absolute; left: 65px; width: 18px; height: 1px; background: #a33; transform: rotate(-40deg); }
.b-pos { height: 123px; padding: 6px 0 0 16px; }
.posgrid { display: grid; grid-template-columns: 124px 1fr; grid-auto-rows: 19px; row-gap: 3px; }
.pcell { display: flex; align-items: center; }
.pk { width: 20px; height: 16px; flex: none; font: 11px "Liberation Sans", sans-serif; fill: #ddd; padding-right: 1px; }
.pi { width: 20px; flex: none; font-size: 11px; text-align: center; color: #ddd; line-height: 9px; }
.ul-i { text-decoration: underline; }
.it { font: italic 14px "Liberation Serif", serif; }
.serif { font: 13px "Liberation Serif", serif; }
.slab { text-align: left; padding-left: 3px; width: 18px; font-size: 11.500px; }
.w62 { width: 62px; }
.w65 { width: 65px; }
.w80 { width: 80px; height: 20px; margin-top: 3px; }
.stepper { position: relative; width: 10px; height: 19px; margin-left: 5px; background: #323232; border-radius: 5px; flex: none; }
.rc .stepper { margin-left: 3px; }
.stepper::before { content: ""; position: absolute; left: 2px; top: 3px; border: 3px solid transparent; border-bottom: 4px solid #ccc; border-top: 0; }
.stepper::after { content: ""; position: absolute; left: 2px; bottom: 3px; border: 3px solid transparent; border-top: 4px solid #ccc; border-bottom: 0; }
.chk { display: flex; align-items: center; margin: 10px 0 0 19px; }
.chk i { width: 14px; height: 14px; background: #353535; border: 1px solid #2c2c2c; border-radius: 3px; margin-right: 3px; }
.b-typo { height: 64px; padding: 4px 0 0 13px; }
.tgroup { display: grid; grid-template-columns: 30px repeat(7, 27px); height: 21px; width: 220px; border: 1px solid #2d2d2d; border-radius: 3px; background: #3a3a3a; }
.tgroup span { display: flex; align-items: center; justify-content: center; font: 13.500px "Liberation Serif", serif; border-left: 1px solid #2d2d2d; color: #ddd; line-height: 1; }
.tgroup span:first-child { border-left: 0; }
.tgroup .on { background: #262626; font-size: 16px; color: #fff; }
.tgroup .dim { color: #777; font-size: 18px; }
.tgroup sup, .tgroup sub { font-size: 9px; line-height: 1; }
.tgroup .sm { font-size: 12px; }
.tgroup small { font-size: 9px; }
.trow2 { display: flex; align-items: center; margin-top: 6px; }
.tbtn { width: 30px; height: 20px; border: 1px solid #2d2d2d; border-radius: 3px; background: #3a3a3a; display: flex; align-items: center; justify-content: center; font: 15px "Liberation Serif", serif; color: #777; margin-right: 1px; }
.tbtn b { font-weight: 400; font-size: 12px; border: 1px solid #777; padding: 0 1px; }
.more { width: 24px; height: 17px; margin: 3px 0 0 17px; border: 1px solid #2d2d2d; border-radius: 3px; background: #333; display: flex; align-items: center; justify-content: center; }
.b-lang { height: 118px; padding-top: 10px; }
.lrow { display: flex; align-items: center; height: 21px; margin-bottom: 4px; }
.lrow label { width: 137px; text-align: right; padding: 1px 4px 0 0; flex: none; font-size: 11.900px; white-space: nowrap; }
.lrow label.tight { font-size: 11.600px; letter-spacing: -.75px; }
.w101 { width: 101px; height: 21px; }
.b-opt { padding-top: 10px; }
.typrow { display: flex; align-items: center; height: 22px; padding-left: 18px; }
.typrow span:first-child { width: 27px; font-size: 12.500px; flex: none; padding-top: 2px; }
.w74 { width: 74px; height: 22px; padding-left: 4px; }
.hinz { margin: 3px 0 0 52px; width: 67px; height: 18px; border: 1px solid #2f2f2f; border-radius: 3px; color: #777; font-size: 12.800px; display: flex; align-items: center; justify-content: center; background: #3a3a3a; padding-top: 2px; white-space: nowrap; }
.thead { margin: 7px 0 0 4px; width: 240px; height: 25px; background: #2c2c2c; display: grid; grid-template-columns: 76px 76px 61px 27px; align-items: center; font-size: 13.400px; }
.thead span { padding: 3px 0 0 6px; border-right: 1px solid #424242; height: 18px; display: flex; align-items: center; }
.trow { display: flex; align-items: center; margin-top: 3px; height: 20px; padding-left: 9px; }
.d-in { width: 56px; height: 20px; background: #383838; border: 1px solid #333; border-radius: 2px; color: #777; font-size: 12.500px; padding: 2px 0 0 3px; display: flex; align-items: center; flex: none; }
.trow .stepper { height: 20px; margin-left: 2px; opacity: .6; }
.m2 { margin-left: 8px; width: 55px; }
.m3 { margin-left: 8px; width: 54px; }
.qs { font-size: 10px; letter-spacing: .5px; }
.xc { width: 16px; height: 16px; margin-left: 8px; border: 2px solid #bbb; border-radius: 50%; background: #2a2a2a; color: #ddd; display: flex; align-items: center; justify-content: center; font-size: 15px; line-height: 1; font-weight: 700; flex: none; }
.scrolltrack { width: 15px; flex: none; padding: 3px 3px 0 3px; background: #333; }
.scrolltrack i { width: 8px; height: 471px; background: #4e4e4e; border-radius: 4px; }

/* workspace */
.workspace { flex: 1; min-width: 0; display: flex; flex-direction: column; background: #222; }
.doctabs { height: 22px; display: flex; flex: none; font-size: 10.200px; }
.dt { display: flex; align-items: center; justify-content: center; border-bottom: 1px solid #222; padding-top: 3px; }
.dt1 { width: 657px; background: #2b2b2b; color: #777; }
.dt2 { width: 653px; background: #333; color: #bbb; }
.dt3 { flex: 1; background: #2b2b2b; }
.rulerrow { height: 20px; display: flex; flex: none; background: #3a3a3a; }
.corner { width: 22px; flex: none; font-size: 10.500px; color: #bbb; display: flex; align-items: flex-end; padding: 0 0 2px 5px; }
.hruler { flex: 1; display: flex; overflow: hidden; position: relative; }
.hruler span {
  flex: 0 0 75.360px; position: relative; height: 20px;
  background:
    linear-gradient(#ccc, #ccc) 0 100% / 1px 8px no-repeat,
    linear-gradient(to right, #ccc 1px, transparent 1px) 0 100% / 15.072px 5px repeat-x,
    linear-gradient(to right, #ccc 1px, transparent 1px) 0 100% / 7.536px 2px repeat-x;
}
.hruler span:first-child { margin-left: -60.360px; }
.hruler b { position: absolute; left: 0; top: 1px; transform: translateX(-50%); font-weight: 400; font-size: 10.500px; color: #bbb; }
.rmark { position: absolute; left: 180px; top: 0; width: 1px; height: 20px; background: #ddd; }
.canvasrow { flex: 1; display: flex; min-height: 0; }
.vruler { width: 22px; flex: none; background: #303030; overflow: hidden; display: flex; flex-direction: column; }
.vruler span {
  flex: 0 0 75.360px; position: relative;
  background:
    linear-gradient(#ccc, #ccc) 100% 0 / 7px 1px no-repeat,
    linear-gradient(#ccc 1px, transparent 1px) 100% 0 / 4px 15.072px repeat-y,
    linear-gradient(#ccc 1px, transparent 1px) 100% 0 / 2px 7.536px repeat-y;
}
.vruler span:first-child { margin-top: -29.360px; }
.vruler b { position: absolute; left: 2px; top: 0; font-weight: 400; font-size: 10.500px; color: #bbb; writing-mode: vertical-rl; transform: translateY(-50%) rotate(180deg); }
.canvas { flex: 1; background: #222; padding: 35px 0 0 79px; overflow: hidden; }
.bleed { width: 1142px; height: 814px; border: 2px solid #474747; padding: 9px 0 0 10px; }
.page { width: 1118px; height: 791px; background: #fff; box-shadow: 0 0 0 1px #777; padding: 56px 0 0 75px; }
.margins { width: 968px; height: 698px; border: 2px solid #7a95ba; border-top-color: #88a3c4; display: flex; gap: 15px; background: #f7fdfd; }
.margins i { flex: 1; background: #fff; border-left: 1px solid #8fdada; border-right: 1px solid #8fdada; }
.margins i:first-child { border-left: 0; }
.margins i:last-child { border-right: 0; }

/* right panel */
.rightpanel { width: 283px; flex: none; padding-top: 2px; background: #333; display: flex; flex-direction: column; border-left: 1px solid #2a2a2a; }
.rightpanel .grip { margin-left: 6px; }
.transform { height: 100px; flex: none; background: #3d3d3d; display: grid; grid-template-columns: 39px 30px 60px 24px 59px 24px; grid-template-rows: 19px 19px 19px; column-gap: 0; row-gap: 3px; padding: 10px 0 0 17px; font-size: 13px; align-items: center; }
.transform label { text-align: right; padding: 3px 3px 0 0; color: #eee; font-size: 12.500px; }
.transform .r3 { margin-top: 20px; }
.transform .x1 { grid-column: 2; }
.anchor { grid-row: 1 / span 2; grid-column: 1; width: 39px; height: 39px; margin-top: 10px; display: grid; grid-template-columns: repeat(3, 1fr); grid-template-rows: repeat(3, 1fr); position: relative; }
.anchor::before { content: ""; position: absolute; inset: 3px; background: #5a5a5a; }
.anchor i { position: relative; width: 7px; height: 7px; background: #4e4e4e; align-self: center; justify-self: center; }
.anchor i:nth-child(3n+1) { justify-self: start; }
.anchor i:nth-child(3n) { justify-self: end; }
.anchor i:nth-child(-n+3) { align-self: start; }
.anchor i:nth-child(n+7) { align-self: end; }
.anchor .mid { background: #484848; width: 5px; height: 5px; }
.link { margin-left: 11px; grid-row: 1 / span 2; grid-column: 6; align-self: center; }
.subh { height: 22px; flex: none; margin-top: 1px; background: #353535; display: flex; align-items: center; padding: 2px 0 0 9px; font-size: 12.500px; color: #eee; position: relative; }
.subic { margin-left: auto; display: flex; align-items: center; gap: 7px; padding: 0 4px 2px 0; }
.subic svg { width: 15px; height: 17px; }
.subic .hi { color: #eee; margin-right: 3px; }
.lo { color: #888; }
.spread { width: 14px !important; height: 10px !important; margin-right: 11px; }
.plist { display: flex; align-items: flex-start; flex: none; padding-left: 7px; font-size: 12.500px; }
.plist.m { height: 92px; padding-top: 5px; }
.plist.s { height: 244px; padding-top: 1px; padding-left: 5px; }
.plist span { margin: 5px 0 0 8px; }
.plist.s span { margin-top: 8px; margin-left: 5px; }
.thumb { width: 32px; height: 22px; background: #fff; }
.thumb.big { width: 36px; height: 27px; box-shadow: inset 0 0 0 2px #aaa, inset 0 0 0 3px #555; }
.layerctl { height: 30px; flex: none; background: #3d3d3d; display: flex; align-items: center; padding-left: 5px; font-size: 12.500px; }
.lk { width: 57px; flex: none; padding-top: 2px; }
.l-op { width: 47px; height: 19px; font-size: 12px; }
.l-mode { width: 128px; height: 19px; margin-left: 4px; background: #3a3a3a; }
.gear { margin-left: 5px; }
.lock { margin-left: 8px; }
.layerrow { height: 33px; flex: none; background: #333; border-bottom: 1px solid #2b2b2b; display: flex; align-items: center; position: relative; color: #aaa; font-size: 12.500px; }
.orange { width: 2px; height: 27px; margin: 5px 0 0 0; background: #d87a3a; flex: none; }
.lthumb { width: 30px; height: 30px; margin-left: 19px; background: #2a2a2a; border: 1px solid #0e0e0e; flex: none; }
.layerrow span { margin-left: 6px; }
.lcheck { position: absolute; right: 18px; top: 8px; width: 14px; height: 14px; background: #2c2c2c; border-radius: 2px; display: flex; align-items: center; justify-content: center; }
.rspace { flex: 1; }
.rfoot { height: 22px; flex: none; background: #404040; display: flex; align-items: center; color: #ccc; position: relative; }
.stack { width: 20px; height: 20px; margin-left: 5px; background: #333; display: flex; align-items: center; justify-content: center; flex: none; }
.f-mask { margin-left: 78px; flex: none; }
.f-adj { margin-left: 10px; flex: none; }
.fx { font: italic 16px "Liberation Serif", serif; margin-left: 9px; color: #ccc; }
.f-doc { margin-left: 80px; flex: none; }
.f-tr { width: 13px; height: 15px; margin-left: 12px; flex: none; }

/* status */
.status { height: 18px; background: #333; display: flex; align-items: center; font-size: 12.500px; overflow: hidden; padding-top: 4px; }
.status p { margin: 0; color: #ddd; white-space: nowrap; letter-spacing: .1px; }
.nav { display: flex; align-items: center; padding-left: 12px; width: 211px; flex: none; }
.nav span { margin-left: 37px; width: 38px; white-space: nowrap; flex: none; }
.nav .bar { width: 1px; height: 10px; background: #777; }
.nav .lt { width: 0; height: 0; border: 5px solid transparent; border-right: 8px solid #777; border-left: 0; }
.nav .n2 { margin-left: 10px; }
.nav .rt { width: 0; height: 0; border: 5.500px solid transparent; border-left: 9px solid #eee; border-right: 0; margin-left: 33px; }
.nav .n3 { border-left-color: #777; margin-left: 8px; border-width: 5px 0 5px 8px; }
.nav .dimbar { background: #777; margin-left: 1px; }
.sdoc { width: 15px; height: 17px; color: #ddd; margin-left: 9px; flex: none; }
```
